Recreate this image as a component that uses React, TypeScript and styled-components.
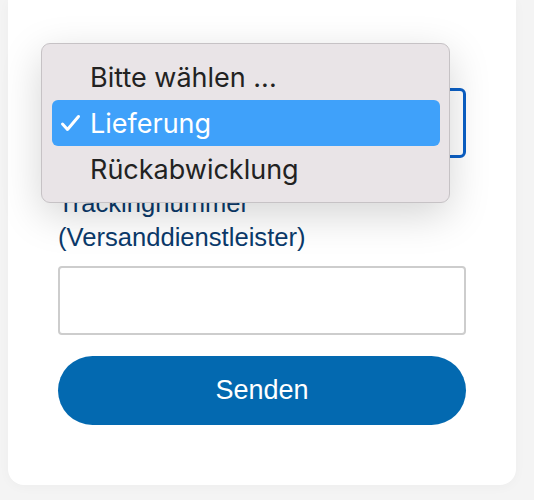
import styled, { createGlobalStyle } from "styled-components";

const GlobalStyle = createGlobalStyle`
  body {
    margin: 0;
    background: #f4f4f4;
    font-family: "Liberation Sans", Arial, sans-serif;
  }
`;

const Page = styled.div`
  padding: 0 18px 15px 8px;
`;

const Card = styled.div`
  background: #ffffff;
  border-radius: 0 0 16px 16px;
  padding: 43px 50px 60px;
  box-shadow: 0 2px 12px rgba(0, 0, 0, 0.03);
`;

const Form = styled.form`
  display: flex;
  flex-direction: column;
`;

const Field = styled.div<{ $spacing: number }>`
  display: flex;
  flex-direction: column;
  gap: 12px;
  margin-bottom: ${(p) => p.$spacing}px;
`;

const Label = styled.label`
  font-size: 25.6px;
  line-height: 1.3;
  color: #0b3a6b;
`;

const SelectWrap = styled.div`
  position: relative;
`;

const SelectBox = styled.div`
  box-sizing: border-box;
  height: 70px;
  border: 3px solid #0b60c6;
  border-radius: 6px;
  background: #fff;
  display: flex;
  align-items: center;
  padding: 0 16px;
  font-size: 25.6px;
  color: #222;
`;

const Menu = styled.ul`
  position: absolute;
  left: -17px;
  top: -45px;
  width: 409px;
  box-sizing: border-box;
  margin: 0;
  padding: 10px 9px 10px 10px;
  list-style: none;
  background: #e9e4e7;
  border: 1px solid #c6c2c5;
  border-radius: 9px;
  box-shadow: 0 12px 40px rgba(0, 0, 0, 0.17);
  font-family: Inter, "Liberation Sans", sans-serif;
`;

const Item = styled.li<{ $active?: boolean }>`
  height: 46px;
  display: flex;
  align-items: center;
  border-radius: 6px;
  font-size: 27px;
  color: ${(p) => (p.$active ? "#ffffff" : "#222222")};
  background: ${(p) => (p.$active ? "#3fa1fa" : "transparent")};
`;

const CheckSlot = styled.span`
  width: 38px;
  flex: none;
  display: flex;
  padding-left: 8px;
  box-sizing: border-box;
`;

const Input = styled.input`
  box-sizing: border-box;
  height: 69px;
  border: 2px solid #cdcdcd;
  border-radius: 4px;
  background: #fff;
  font-size: 24px;
  padding: 0 12px;
`;

const Button = styled.button`
  height: 69px;
  border: none;
  border-radius: 35px;
  background: #0369b0;
  color: #fff;
  font-family: "Liberation Sans", Arial, sans-serif;
  font-size: 27px;
  cursor: pointer;
`;

const Check = () => (
  <svg width="21" height="18" viewBox="0 0 21 18" fill="none">
    <path
      d="M2.5 10 L7.5 15.5 L18.5 2.5"
      stroke="#fff"
      strokeWidth="3"
      strokeLinecap="round"
      strokeLinejoin="round"
    />
  </svg>
);

const options = ["Bitte wählen ...", "Lieferung", "Rückabwicklung"];

export default function App() {
  const selected = "Lieferung";
  return (
    <Page>
      <GlobalStyle />
      <Card>
        <Form onSubmit={(e) => e.preventDefault()}>
          <Field $spacing={29}>
            <Label>Anliegen</Label>
            <SelectWrap>
              <SelectBox>{selected}</SelectBox>
              <Menu>
                {options.map((o) => (
                  <Item key={o} $active={o === selected}>
                    <CheckSlot>{o === selected && <Check />}</CheckSlot>
                    {o}
                  </Item>
                ))}
              </Menu>
            </SelectWrap>
          </Field>
          <Field $spacing={21}>
            <Label htmlFor="tracking">Trackingnummer (Versanddienstleister)</Label>
            <Input id="tracking" />
          </Field>
          <Button type="submit">Senden</Button>
        </Form>
      </Card>
    </Page>
  );
}
